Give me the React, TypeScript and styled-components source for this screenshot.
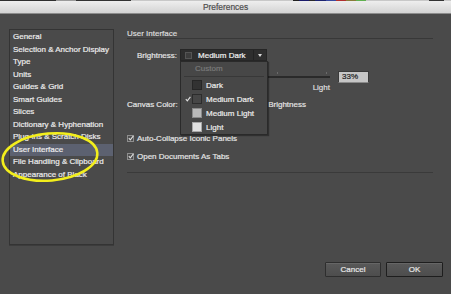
import React from 'react'
import styled, { createGlobalStyle } from 'styled-components'

const GlobalStyle = createGlobalStyle`
  html, body {
    margin: 0;
    padding: 0;
    background: #4a4a4a;
  }
  body {
    font-family: 'Liberation Sans', Arial, sans-serif;
    font-size: 8px;
    color: #e6e6e6;
    -webkit-text-stroke: 0.2px currentColor;
  }
`

const Window = styled.div`
  position: relative;
  width: 451px;
  height: 294px;
  display: flex;
  flex-direction: column;
  overflow: hidden;
  background: #4a4a4a;
`

const TopStrip = styled.div`
  display: flex;
  height: 1px;
  background: #c8c8c8;
`

const StripPart = styled.span<{ $w: number; $c: string }>`
  width: ${(p) => p.$w}px;
  flex-shrink: 0;
  background: ${(p) => p.$c};
`

const TitleBar = styled.div`
  height: 12px;
  line-height: 13px;
  text-align: center;
  font-size: 8.4px;
  color: #4e4e4e;
  background: linear-gradient(#eeeeee, #d3d3d3);
  border-bottom: 1px solid #8c8c8c;
`

const Body = styled.div`
  flex: 1;
  display: flex;
  flex-direction: column;
  padding: 15px 0 0 9px;
`

const Main = styled.div`
  display: flex;
  align-items: flex-start;
  gap: 13px;
  height: 216px;
`

const Sidebar = styled.ul`
  list-style: none;
  margin: 0;
  padding: 1px 0 0;
  width: 103px;
  height: 213px;
  border: 1px solid #343434;
  box-shadow: 0 1px 0 #3c3c3c;
`

const SideItem = styled.li<{ $active?: boolean }>`
  height: 12.5px;
  line-height: 12.5px;
  padding-left: 3px;
  white-space: nowrap;
  color: #ececec;
  background: ${(p) => (p.$active ? '#5c6170' : 'transparent')};
`

const Panel = styled.div`
  flex: 1;
  margin-right: 18px;
`

const Header = styled.div`
  line-height: 9px;
  color: #dcdcdc;
  border-bottom: 1px solid #383838;
`

const BrightnessRow = styled.div`
  display: flex;
  align-items: center;
  margin-top: 10px;
  padding-left: 10px;
  height: 12px;
`

const Label = styled.span`
  white-space: nowrap;
  color: #e4e4e4;
`

const Dropdown = styled.div`
  position: relative;
  margin-left: 3px;
  width: 85px;
  height: 10px;
  display: flex;
  align-items: center;
  background: #2e2e2e;
  border: 1px solid #262626;
`

const Swatch = styled.span<{ $c: string; $b: string; $size: number }>`
  width: ${(p) => p.$size}px;
  height: ${(p) => p.$size}px;
  box-sizing: border-box;
  flex-shrink: 0;
  background: ${(p) => p.$c};
  border: 1px solid ${(p) => p.$b};
`

const DropText = styled.span`
  margin-left: 6px;
  color: #f0f0f0;
  white-space: nowrap;
`

const ArrowCell = styled.span`
  margin-left: auto;
  width: 12px;
  height: 10px;
  display: flex;
  align-items: center;
  justify-content: center;
  border-left: 1px solid #232323;
  &::after {
    content: '';
    border-left: 2.5px solid transparent;
    border-right: 2.5px solid transparent;
    border-top: 3px solid #d8d8d8;
  }
`

const Menu = styled.div`
  position: absolute;
  z-index: 2;
  top: 11px;
  left: -1px;
  width: 86px;
  background: #474747;
  border: 1px solid #2a2a2a;
  box-shadow: 1px 1px 1px rgba(0, 0, 0, 0.35);
`

const MenuTitle = styled.div`
  height: 14px;
  line-height: 14px;
  padding-left: 14px;
  color: #7a7a7a;
`

const MenuSep = styled.div`
  height: 1px;
  margin: 0 3px 1px;
  background: #383838;
`

const MenuItem = styled.div`
  display: flex;
  align-items: center;
  height: 14px;
`

const CheckCell = styled.span`
  width: 11px;
  display: flex;
  justify-content: center;
  padding-left: 2px;
  box-sizing: border-box;
`

const MenuText = styled.span`
  margin-left: 4px;
  color: #ececec;
  white-space: nowrap;
`

const SliderRow = styled.div`
  display: flex;
  align-items: flex-start;
  margin-top: 10px;
  margin-left: 63px;
`

const SliderBlock = styled.div`
  width: 140px;
  padding-top: 1px;
`

const Ticks = styled.div`
  position: relative;
  height: 2px;
`

const Tick = styled.span<{ $x: number }>`
  position: absolute;
  left: ${(p) => p.$x}px;
  top: 0;
  width: 1px;
  height: 2px;
  background: #6a6a6a;
`

const Track = styled.div`
  margin-top: 2px;
  height: 2px;
  background: #2a2a2a;
`

const SliderLabels = styled.div`
  display: flex;
  justify-content: space-between;
  margin-top: 5px;
  line-height: 9px;
  color: #dedede;
`

const ValueBox = styled.div`
  margin-left: 8px;
  width: 26px;
  height: 10px;
  line-height: 10px;
  padding-left: 3px;
  background: #c6c6c6;
  color: #1e1e1e;
  border: 1px solid #3a3a3a;
  border-bottom-color: #8a8a8a;
`

const CanvasRow = styled.div`
  display: flex;
  align-items: center;
  margin-top: 8px;
  line-height: 9px;
`

const Radio = styled.span`
  margin-left: 5px;
  width: 7px;
  height: 7px;
  border-radius: 50%;
  border: 1px solid #888;
  box-sizing: border-box;
`

const RadioText = styled.span`
  margin-left: 2px;
  white-space: nowrap;
  color: #e4e4e4;
`

const CheckRow = styled.label<{ $gap: number }>`
  display: flex;
  align-items: center;
  gap: 3px;
  margin-top: ${(p) => p.$gap}px;
  line-height: 9px;
  color: #e4e4e4;
  white-space: nowrap;
`

const CheckBox = styled.span`
  position: relative;
  width: 7px;
  height: 7px;
  box-sizing: border-box;
  border: 1px solid #8e8e8e;
  background: #4e4e4e;
  & svg {
    position: absolute;
    left: 0;
    top: -1px;
  }
`

const Divider = styled.div`
  margin-top: 11px;
  height: 1px;
  background: #3a3a3a;
`

const Footer = styled.div`
  display: flex;
  justify-content: flex-end;
  gap: 5px;
  margin-top: 17px;
  padding-right: 8px;
`

const Button = styled.button<{ $primary?: boolean }>`
  width: ${(p) => (p.$primary ? 57 : 56)}px;
  height: 15px;
  padding: 0;
  font-family: inherit;
  font-size: 8px;
  color: #e8e8e8;
  -webkit-text-stroke: 0.2px currentColor;
  background: linear-gradient(#595959, #4d4d4d);
  border: 1px solid ${(p) => (p.$primary ? '#1e1e1e' : '#2e2e2e')};
  border-radius: 1px;
  box-shadow: inset 0 1px 0 #666666;
`

const Annotation = styled.svg`
  position: absolute;
  left: 0;
  top: 128px;
  pointer-events: none;
`

const CheckMark = ({ color = '#dcdcdc' }: { color?: string }) => (
  <svg width="6" height="6" viewBox="0 0 6 6">
    <path d="M0.8 3.2 L2.3 4.8 L5.4 0.8" fill="none" stroke={color} strokeWidth="1.1" />
  </svg>
)

const sideItems = [
  'General',
  'Selection & Anchor Display',
  'Type',
  'Units',
  'Guides & Grid',
  'Smart Guides',
  'Slices',
  'Dictionary & Hyphenation',
  'Plug-ins & Scratch Disks',
  'User Interface',
  'File Handling & Clipboard',
  'Appearance of Black',
]

const brightness = [
  { name: 'Dark', c: '#323232', b: '#262626' },
  { name: 'Medium Dark', c: '#464646', b: '#2c2c2c', checked: true },
  { name: 'Medium Light', c: '#b9b9b9', b: '#8a8a8a' },
  { name: 'Light', c: '#e2e2e2', b: '#a8a8a8' },
]

const strip: [number, string][] = [
  [56, '#2e2e2e'],
  [20, '#9a9a9a'],
  [55, '#333333'],
  [162, '#c8c8c8'],
  [6, '#222222'],
  [10, '#1b1b6a'],
  [6, '#2a2a2a'],
  [11, '#1d2470'],
  [10, '#3a4aa0'],
  [10, '#b03030'],
  [10, '#8a7a3a'],
  [10, '#60b050'],
  [63, '#c8c8c8'],
  [15, '#333333'],
]

const App = () => {
  return (
    <Window>
      <GlobalStyle />
      <TopStrip>
        {strip.map(([w, c], i) => (
          <StripPart key={i} $w={w} $c={c} />
        ))}
      </TopStrip>
      <TitleBar>Preferences</TitleBar>
      <Body>
        <Main>
          <Sidebar>
            {sideItems.map((item) => (
              <SideItem key={item} $active={item === 'User Interface'}>
                {item}
              </SideItem>
            ))}
          </Sidebar>
          <Panel>
            <Header>User Interface</Header>
            <BrightnessRow>
              <Label>Brightness:</Label>
              <Dropdown>
                <Swatch $c="#3d3d3d" $b="#555555" $size={7} style={{ marginLeft: 4 }} />
                <DropText>Medium Dark</DropText>
                <ArrowCell />
                <Menu>
                  <MenuTitle>Custom</MenuTitle>
                  <MenuSep />
                  {brightness.map((b) => (
                    <MenuItem key={b.name}>
                      <CheckCell>{b.checked && <CheckMark color="#e0e0e0" />}</CheckCell>
                      <Swatch $c={b.c} $b={b.b} $size={10} />
                      <MenuText>{b.name}</MenuText>
                    </MenuItem>
                  ))}
                </Menu>
              </Dropdown>
            </BrightnessRow>
            <SliderRow>
              <SliderBlock>
                <Ticks>
                  <Tick $x={0} />
                  <Tick $x={44} />
                  <Tick $x={87} />
                  <Tick $x={136} />
                </Ticks>
                <Track />
                <SliderLabels>
                  <span>Dark</span>
                  <span>Light</span>
                </SliderLabels>
              </SliderBlock>
              <ValueBox>33%</ValueBox>
            </SliderRow>
            <CanvasRow>
              <Label>Canvas Color:</Label>
              <Radio />
              <RadioText>Match User Interface Brightness</RadioText>
            </CanvasRow>
            <CheckRow $gap={25}>
              <CheckBox>
                <CheckMark />
              </CheckBox>
              Auto-Collapse Iconic Panels
            </CheckRow>
            <CheckRow $gap={9}>
              <CheckBox>
                <CheckMark />
              </CheckBox>
              Open Documents As Tabs
            </CheckRow>
            <Divider />
          </Panel>
        </Main>
        <Footer>
          <Button>Cancel</Button>
          <Button $primary>OK</Button>
        </Footer>
      </Body>
      <Annotation width="102" height="58" viewBox="0 0 102 58">
        <ellipse
          cx="50"
          cy="29"
          rx="47.5"
          ry="23.5"
          transform="rotate(-5 50 29)"
          fill="none"
          stroke="#f2ee1c"
          strokeWidth="2.5"
        />
      </Annotation>
    </Window>
  )
}

export default App
